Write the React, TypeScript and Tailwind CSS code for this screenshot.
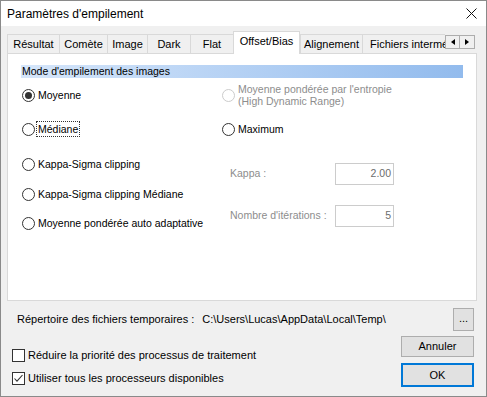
import { useState } from 'react'

const tabs = [
  { label: 'Résultat', w: 'w-[52px]' },
  { label: 'Comète', w: 'w-[48px]' },
  { label: 'Image', w: 'w-[40px]' },
  { label: 'Dark', w: 'w-[43px]' },
  { label: 'Flat', w: 'w-[43px]' },
  { label: 'Offset/Bias', w: 'w-[67px]' },
  { label: 'Alignement', w: 'w-[62px]' },
  { label: 'Fichiers intermédiaires', w: 'w-[120px]' },
]

function Radio({ checked, disabled }: { checked?: boolean; disabled?: boolean }) {
  return (
    <span
      className={`flex h-[13px] w-[13px] shrink-0 items-center justify-center rounded-full border bg-white ${
        disabled ? 'border-[#cccccc]' : 'border-[#333333]'
      }`}
    >
      {checked ? <span className="h-[7px] w-[7px] rounded-full bg-[#333333]" /> : null}
    </span>
  )
}

function Checkbox({ checked }: { checked?: boolean }) {
  return (
    <span className="flex h-[13px] w-[13px] shrink-0 items-center justify-center border border-[#333333] bg-white">
      {checked ? (
        <svg width="11" height="11" viewBox="0 0 11 11">
          <path d="M1.5 5.5 L4 8.2 L9.5 2" fill="none" stroke="#333333" strokeWidth="1.1" />
        </svg>
      ) : null}
    </span>
  )
}

function RadioItem({
  label,
  checked,
  focused,
}: {
  label: string
  checked?: boolean
  focused?: boolean
}) {
  return (
    <div className="flex h-[16px] items-center">
      <Radio checked={checked} />
      <span
        className={`ml-[2px] px-[1px] leading-[14px] ${
          focused ? 'outline outline-1 outline-dotted outline-[#333333]' : ''
        }`}
      >
        {label}
      </span>
    </div>
  )
}

function Field({ label, value }: { label: string; value: string }) {
  return (
    <div className="flex h-[22px] items-center">
      <span className="ml-[8px] w-[105px] text-[#8d8d8d]">{label}</span>
      <div className="flex h-[22px] w-[59px] items-center justify-end border border-[#cccccc] bg-white pr-[2px] text-[#6d6d6d]">
        {value}
      </div>
    </div>
  )
}

export default function App() {
  const [active] = useState('Offset/Bias')

  return (
    <div className="flex h-[397px] w-[487px] flex-col overflow-hidden border border-[#8a8a8a] bg-[#f0f0f0] font-['Liberation_Sans',Arial,sans-serif] text-[11px] text-black">
      {/* title bar */}
      <div className="flex h-[25px] shrink-0 items-center justify-between bg-white pl-[6px] pr-[9px]">
        <span className="text-[12px]">Paramètres d'empilement</span>
        <svg width="11" height="11" viewBox="0 0 11 11">
          <path d="M0.5 0.5 L10.5 10.5 M10.5 0.5 L0.5 10.5" stroke="#111111" strokeWidth="1" />
        </svg>
      </div>

      {/* tab strip */}
      <div className="relative z-10 mt-[5px] ml-[6px] flex h-[22px] items-end">
        <div className="flex h-[23px] w-[438px] items-end self-start overflow-hidden">
          {tabs.map((t) => {
            const sel = t.label === active
            return (
              <div
                key={t.label}
                className={`flex shrink-0 items-center justify-center whitespace-nowrap border-t border-l border-[#d9d9d9] ${t.w} ${
                  sel
                    ? 'h-[23px] border-r bg-white pb-[3px]'
                    : 'mb-[1px] h-[19px] bg-[#f0f0f0]'
                } ${t.label === 'Fichiers intermédiaires' ? 'justify-start pl-[7px]' : ''}`}
              >
                {t.label}
              </div>
            )
          })}
        </div>
        <div className="mt-[4px] mb-[4px] flex self-start">
          {['M4 0 L0 3 L4 6 Z', 'M0 0 L4 3 L0 6 Z'].map((d) => (
            <div
              key={d}
              className="flex h-[14px] w-[15px] items-center justify-center border border-[#adadad] bg-[#f0f0f0] [&:last-child]:border-l-0"
            >
              <svg width="4" height="6" viewBox="0 0 4 6">
                <path d={d} fill="#000000" />
              </svg>
            </div>
          ))}
        </div>
      </div>

      {/* panel */}
      <div className="ml-[6px] flex h-[248px] w-[470px] shrink-0 flex-col border border-[#d9d9d9] bg-white text-[10.5px]">
        <div className="mt-[11px] ml-[13px] h-[13px] w-[442px] bg-gradient-to-r from-[#d6e6fa] to-[#92bbed] pl-[1px] leading-[13px]">
          Mode d'empilement des images
        </div>

        <div className="flex pl-[14px]">
          <div className="flex w-[200px] flex-col">
            <div className="mt-[9px]">
              <RadioItem label="Moyenne" checked />
            </div>
            <div className="mt-[18px]">
              <RadioItem label="Médiane" focused />
            </div>
            <div className="mt-[19px]">
              <RadioItem label="Kappa-Sigma clipping" />
            </div>
            <div className="mt-[14px]">
              <RadioItem label="Kappa-Sigma clipping Médiane" />
            </div>
            <div className="mt-[13px]">
              <RadioItem label="Moyenne pondérée auto adaptative" />
            </div>
          </div>

          <div className="flex flex-col">
            <div className="mt-[5px] flex h-[24px] items-center">
              <Radio disabled />
              <span className="ml-[3px] leading-[12px] text-[#8d8d8d]">
                Moyenne pondérée par l'entropie
                <br />
                (High Dynamic Range)
              </span>
            </div>
            <div className="mt-[14px]">
              <RadioItem label="Maximum" />
            </div>
            <div className="mt-[26px]">
              <Field label="Kappa :" value="2.00" />
            </div>
            <div className="mt-[20px]">
              <Field label="Nombre d'itérations :" value="5" />
            </div>
          </div>
        </div>
      </div>

      {/* temp folder row */}
      <div className="mt-[7px] flex h-[23px] items-center pl-[16px] pr-[12px]">
        <span>Répertoire des fichiers temporaires :</span>
        <span className="ml-[8px]">C:\Users\Lucas\AppData\Local\Temp\</span>
        <div className="flex-1" />
        <button className="flex h-[23px] w-[21px] items-center justify-center border border-[#adadad] bg-[#e1e1e1] pb-[3px]">
          ...
        </button>
      </div>

      {/* options + buttons */}
      <div className="mt-[5px] flex pl-[11px] pr-[12px]">
        <div className="flex flex-1 flex-col">
          <div className="mt-[11px] flex h-[16px] items-center">
            <Checkbox />
            <span className="ml-[3px]">Réduire la priorité des processus de traitement</span>
          </div>
          <div className="mt-[7px] flex h-[16px] items-center">
            <Checkbox checked />
            <span className="ml-[3px]">Utiliser tous les processeurs disponibles</span>
          </div>
        </div>
        <div className="flex w-[73px] flex-col">
          <button className="flex h-[21px] items-center justify-center border border-[#adadad] bg-[#e1e1e1]">
            Annuler
          </button>
          <button className="mt-[6px] flex h-[24px] items-center justify-center border-2 border-[#0078d7] bg-[#e1e1e1]">
            OK
          </button>
        </div>
      </div>
    </div>
  )
}
